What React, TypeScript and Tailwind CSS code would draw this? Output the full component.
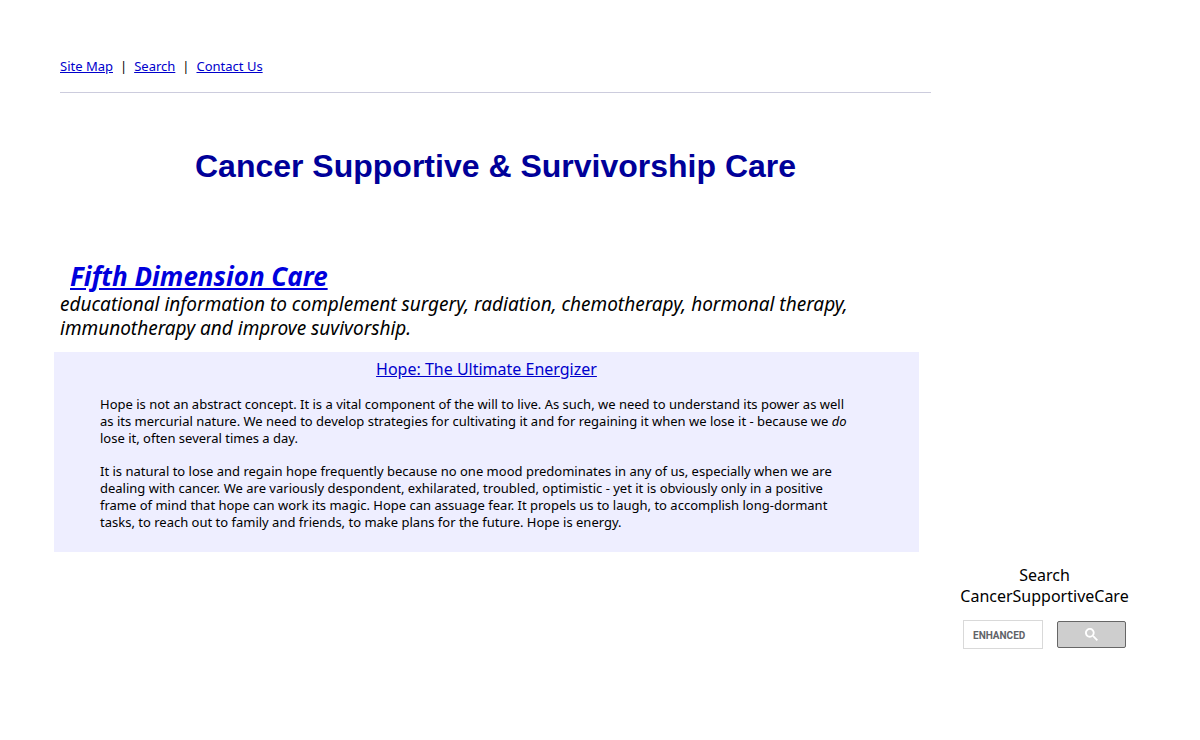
import type { ReactNode } from "react";

function TextLink({ href, children }: { href: string; children: ReactNode }) {
  return (
    <a href={href} className="text-[#0000cc] underline">
      {children}
    </a>
  );
}

function TopNav() {
  return (
    <nav className="ml-[6px] flex gap-[7px] border-b border-[#ccccdd] pb-4 text-[13px] leading-[20px]">
      <TextLink href="#site-map">Site Map</TextLink>
      <span>|</span>
      <TextLink href="#search">Search</TextLink>
      <span>|</span>
      <TextLink href="#contact">Contact Us</TextLink>
    </nav>
  );
}

function HopeArticle() {
  return (
    <article className="mr-3 bg-[#eeeeff] px-[46px] pt-[6px] pb-[21px] text-[13px] leading-[17px]">
      <h3 className="text-center text-[16px] leading-[22px]">
        <TextLink href="#hope">Hope: The Ultimate Energizer</TextLink>
      </h3>
      <p className="mt-4 whitespace-nowrap">
        Hope is not an abstract concept. It is a vital component of the will to live. As such, we need to understand its power as well
        <br />
        as its mercurial nature. We need to develop strategies for cultivating it and for regaining it when we lose it - because we <em>do</em>
        <br />
        lose it, often several times a day.
      </p>
      <p className="mt-4 whitespace-nowrap">
        It is natural to lose and regain hope frequently because no one mood predominates in any of us, especially when we are
        <br />
        dealing with cancer. We are variously despondent, exhilarated, troubled, optimistic - yet it is obviously only in a positive
        <br />
        frame of mind that hope can work its magic. Hope can assuage fear. It propels us to laugh, to accomplish long-dormant
        <br />
        tasks, to reach out to family and friends, to make plans for the future. Hope is energy.
      </p>
    </article>
  );
}

function SiteSearch() {
  return (
    <form role="search" className="text-center" onSubmit={(e) => e.preventDefault()}>
      <label htmlFor="site-search" className="block text-[16px] leading-[21px]">
        Search
        <br />
        CancerSupportiveCare
      </label>
      <div className="mt-[13px] flex items-center justify-center gap-[14px]">
        <input
          id="site-search"
          type="text"
          placeholder="ENHANCED"
          className="h-[29px] w-[80px] border border-[#d9d9d9] bg-white px-[9px] pt-[2px] font-[Roboto,sans-serif] text-[10px] font-bold text-[#5f6368] placeholder:text-[#5f6368]"
        />
        <button
          type="submit"
          aria-label="Search"
          className="flex h-[27px] w-[69px] items-center justify-center rounded-[2px] border border-[#666666] bg-[#cecece]"
        >
          <svg viewBox="0 0 13 13" className="size-[13px]" fill="#ffffff" aria-hidden="true">
            <path d="m4.8495 7.8226c0.82666 0 1.5262-0.29146 2.0985-0.87438 0.57232-0.58292 0.86378-1.2877 0.87438-2.1144 0.010599-0.82666-0.28086-1.5262-0.87438-2.0985-0.59352-0.57232-1.293-0.86378-2.0985-0.87438-0.8055-0.010599-1.5103 0.28086-2.1144 0.87438-0.60414 0.59352-0.8956 1.293-0.87438 2.0985 0.021197 0.8055 0.31266 1.5103 0.87438 2.1144 0.56172 0.60414 1.2665 0.8956 2.1144 0.87438zm4.4695 0.2115 3.681 3.6819-1.259 1.284-3.6817-3.7 0.0019784-0.69479-0.090043-0.098846c-0.87973 0.76087-1.92 1.1413-3.1207 1.1413-1.3553 0-2.5025-0.46363-3.4417-1.3909s-1.4088-2.0686-1.4088-3.4239c0-1.3553 0.4696-2.4966 1.4088-3.4239 0.9392-0.92727 2.0864-1.3969 3.4417-1.4088 1.3553-0.011889 2.4906 0.45771 3.406 1.4088 0.9154 0.95107 1.379 2.0924 1.3909 3.4239 0 1.2126-0.38043 2.2588-1.1413 3.1385l0.098834 0.090049z" />
          </svg>
        </button>
      </div>
    </form>
  );
}

export default function App() {
  return (
    <div className="flex items-end bg-white pt-14 pr-14 pb-14 pl-[54px] font-['Noto_Sans',sans-serif] text-black">
      <main className="mb-[97px] min-w-0 flex-1">
        <TopNav />
        <h1 className="mt-[53px] ml-[6px] text-center font-['Liberation_Sans',Arial,sans-serif] text-[32px] leading-[40px] font-bold text-[#000099]">
          Cancer Supportive &amp; Survivorship Care
        </h1>
        <header className="mt-[75px] mb-3 ml-[6px] italic">
          <h2 className="pl-[10px] text-[26px] leading-[31px] font-bold">
            <a href="#fifth-dimension" className="text-[#0000dd] underline">
              Fifth Dimension Care
            </a>
          </h2>
          <p className="text-[19px] leading-[24px] whitespace-nowrap">
            educational information to complement surgery, radiation, chemotherapy, hormonal therapy,
            <br />
            immunotherapy and improve suvivorship.
          </p>
        </header>
        <HopeArticle />
      </main>
      <aside className="ml-[14px] w-[199px] shrink-0">
        <SiteSearch />
      </aside>
    </div>
  );
}
